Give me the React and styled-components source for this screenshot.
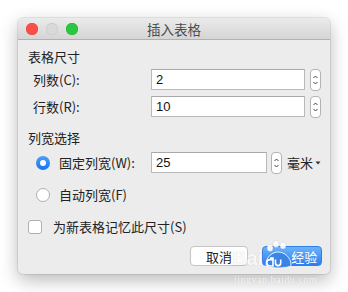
import React from "react";
import styled, { createGlobalStyle } from "styled-components";

const Global = createGlobalStyle`
  html, body { margin: 0; padding: 0; background: #ffffff; }
  body {
    width: 348px; height: 292px; overflow: hidden;
    font-family: "Noto Sans CJK SC", "Noto Sans", "Liberation Sans", sans-serif;
    color: #222;
    -webkit-font-smoothing: antialiased;
  }
`;

const Page = styled.div`
  padding: 18px 0 0 18px;
`;

const Window = styled.div`
  position: relative;
  width: 312px;
  height: 256px;
  background: #ececec;
  border-radius: 5px;
  box-shadow: 0 6px 18px rgba(0,0,0,0.28), 0 0 0 1px rgba(0,0,0,0.08);
  display: flex;
  flex-direction: column;
`;

const TitleBar = styled.div`
  height: 21px;
  flex: none;
  display: flex;
  align-items: center;
  position: relative;
  border-radius: 5px 5px 0 0;
  background: linear-gradient(#ebebeb, #d5d5d5);
  border-bottom: 1px solid #b1b1b1;
`;

const Lights = styled.div`
  display: flex;
  gap: 8px;
  padding-left: 8px;
`;

const Light = styled.span`
  width: 12px;
  height: 12px;
  border-radius: 50%;
  background: ${p => p.$c};
  box-shadow: inset 0 0 0 0.5px ${p => p.$b};
`;

const Title = styled.div`
  position: absolute;
  left: 0; right: 0; top: 0; bottom: 0;
  display: flex;
  align-items: center;
  justify-content: center;
  font-size: 13.5px;
  color: #4d4d4d;
  pointer-events: none;
`;

const Content = styled.div`
  display: flex;
  flex-direction: column;
  padding: 8px 8px 0 10px;
`;

const Heading = styled.div`
  font-size: 13px;
  line-height: 18px;
  height: 18px;
  color: #222;
  margin-top: ${p => p.$mt || 0}px;
`;

const Row = styled.div`
  display: flex;
  align-items: center;
  height: 21px;
  margin-top: ${p => p.$mt || 0}px;
  padding-left: ${p => p.$pl || 0}px;
`;

const Label = styled.div`
  width: ${p => p.$w}px;
  font-size: 13px;
  color: #222;
  white-space: nowrap;
`;

const Input = styled.div`
  box-sizing: border-box;
  width: ${p => p.$w}px;
  height: 21px;
  background: #fff;
  border: 1px solid #b9b9b9;
  border-top-color: #a9a9a9;
  padding-left: 4px;
  font-size: 13px;
  line-height: 19px;
  color: #111;
  font-family: "Liberation Sans", "Noto Sans", sans-serif;
`;

const StepperBox = styled.div`
  box-sizing: border-box;
  width: 11px;
  height: 22px;
  margin-left: ${p => p.$ml || 4}px;
  border: 1px solid #b3b3b3;
  border-radius: 4px;
  background: #fff;
  display: flex;
  align-items: center;
  justify-content: center;
`;

const Stepper = ({ ml }) => (
  <StepperBox $ml={ml}>
    <svg width="7" height="14" viewBox="0 0 7 14">
      <path d="M1.5 5 L3.5 3 L5.5 5" fill="none" stroke="#444" strokeWidth="1" />
      <path d="M1.5 9 L3.5 11 L5.5 9" fill="none" stroke="#444" strokeWidth="1" />
    </svg>
  </StepperBox>
);

const Radio = styled.span`
  box-sizing: border-box;
  width: 14px;
  height: 14px;
  border-radius: 50%;
  flex: none;
  margin-right: 9px;
  background: ${p => (p.$on ? "linear-gradient(#4aa0fb, #1a72f0)" : "#fff")};
  border: ${p => (p.$on ? "none" : "1px solid #b0b0b0")};
  display: flex;
  align-items: center;
  justify-content: center;
  &::after {
    content: "";
    display: ${p => (p.$on ? "block" : "none")};
    width: 6px;
    height: 6px;
    border-radius: 50%;
    background: #fff;
  }
`;

const Unit = styled.div`
  margin-left: 5px;
  font-size: 13px;
  display: flex;
  align-items: center;
  gap: 2px;
`;

const Check = styled.span`
  box-sizing: border-box;
  width: 14px;
  height: 14px;
  border-radius: 3px;
  border: 1px solid #b0b0b0;
  background: #fff;
  margin-right: 11px;
  flex: none;
`;

const Buttons = styled.div`
  display: flex;
  justify-content: flex-end;
  gap: 14px;
  margin-top: 9px;
`;

const Button = styled.div`
  box-sizing: border-box;
  width: ${p => p.$w}px;
  height: 20px;
  border-radius: 4px;
  font-size: 13px;
  display: flex;
  align-items: center;
  justify-content: center;
  background: ${p => (p.$primary ? "linear-gradient(#6cb3fa, #2a7ff2)" : "#fff")};
  color: ${p => (p.$primary ? "#fff" : "#222")};
  border: 1px solid ${p => (p.$primary ? "#2f7fe8" : "#c4c4c4")};
`;

const Watermark = styled.div`
  position: absolute;
  left: 214px;
  top: 222px;
  display: flex;
  flex-direction: column;
  align-items: flex-start;
  pointer-events: none;
`;

const WmTop = styled.div`
  display: flex;
  align-items: flex-end;
`;

const WmBai = styled.span`
  font-family: "Liberation Sans", sans-serif;
  font-weight: bold;
  font-size: 20px;
  line-height: 20px;
  color: rgba(255,255,255,0.9);
  text-shadow: 0 0 1px rgba(0,0,0,0.18);
  margin-bottom: 2px;
`;

const WmJy = styled.span`
  font-size: 13px;
  line-height: 16px;
  color: #fff;
  margin-left: -2px;
  margin-bottom: 5px;
`;

const WmUrl = styled.span`
  font-family: "Liberation Serif", serif;
  font-size: 10px;
  line-height: 11px;
  color: rgba(255,255,255,0.9);
  text-shadow: 0 0 1px rgba(0,0,0,0.15);
  margin-top: 4px;
  margin-left: 2px;
  letter-spacing: 0.5px;
`;

const Paw = () => (
  <svg width="30" height="30" viewBox="0 0 30 30">
    <ellipse cx="7" cy="8" rx="3" ry="3.5" fill="rgba(255,255,255,0.9)" stroke="rgba(0,0,0,0.08)" />
    <ellipse cx="13" cy="4" rx="3" ry="3.5" fill="rgba(255,255,255,0.9)" stroke="rgba(0,0,0,0.08)" />
    <ellipse cx="20" cy="5.5" rx="3" ry="3.5" fill="rgba(255,255,255,0.9)" stroke="rgba(0,0,0,0.08)" />
    <path d="M3 25 C3 16 10 12 15 12 C21 12 28 17 28 25 C28 29 3 29 3 25 Z" fill="rgba(60,130,225,0.9)" stroke="rgba(255,255,255,0.85)" strokeWidth="1" />
    <path d="M7 18 h3 v8 h-3 a3.2 3.2 0 0 1 0 -6.4 h3 M12.5 19.6 v3.4 a2.6 2.6 0 0 0 5.2 0 v-3.4" fill="none" stroke="#fff" strokeWidth="1.6" />
  </svg>
);

export default function App() {
  return (
    <>
      <Global />
      <Page>
        <Window>
          <TitleBar>
            <Lights>
              <Light $c="#fc4c47" $b="#e0443e" />
              <Light $c="#d9d9d9" $b="#c4c4c4" />
              <Light $c="#2ac840" $b="#1eaa2f" />
            </Lights>
            <Title>插入表格</Title>
          </TitleBar>
          <Content>
            <Heading>表格尺寸</Heading>
            <Row $mt={3} $pl={5}>
              <Label $w={118}>列数(C):</Label>
              <Input $w={154}>2</Input>
              <Stepper ml={5} />
            </Row>
            <Row $mt={6} $pl={5}>
              <Label $w={118}>行数(R):</Label>
              <Input $w={154}>10</Input>
              <Stepper ml={5} />
            </Row>
            <Heading $mt={12}>列宽选择</Heading>
            <Row $mt={5} $pl={8}>
              <Radio $on />
              <Label $w={92}>固定列宽(W):</Label>
              <Input $w={116}>25</Input>
              <Stepper ml={4} />
              <Unit>
                毫米
                <svg width="6" height="4" viewBox="0 0 6 4">
                  <path d="M0.5 0.5 L3 3.5 L5.5 0.5 Z" fill="#333" />
                </svg>
              </Unit>
            </Row>
            <Row $mt={11} $pl={8}>
              <Radio />
              <Label $w={120}>自动列宽(F)</Label>
            </Row>
            <Row $mt={11} $pl={-1}>
              <Check />
              <Label $w={200}>为新表格记忆此尺寸(S)</Label>
            </Row>
            <Buttons>
              <Button $w={58}>取消</Button>
              <Button $w={60} $primary />
            </Buttons>
          </Content>
          <Watermark>
            <WmTop>
              <WmBai>Bai</WmBai>
              <Paw />
              <WmJy>经验</WmJy>
            </WmTop>
            <WmUrl>jingyan.baidu.com</WmUrl>
          </Watermark>
        </Window>
      </Page>
    </>
  );
}
